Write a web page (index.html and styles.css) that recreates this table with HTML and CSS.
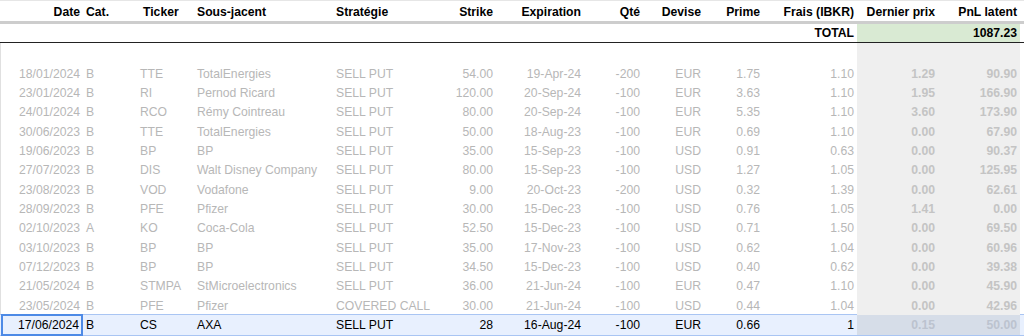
FILE: index.html
```html
<!DOCTYPE html>
<html lang="fr">
<head>
<meta charset="utf-8">
<title>Options</title>
<link rel="stylesheet" href="styles.css">
</head>
<body>
<div class="sheet">
  <div class="row head">
    <div class="c r">Date</div><div class="c">Cat.</div><div class="c tick">Ticker</div><div class="c">Sous-jacent</div><div class="c">Stratégie</div><div class="c r">Strike</div><div class="c r">Expiration</div><div class="c r">Qté</div><div class="c r">Devise</div><div class="c r">Prime</div><div class="c r">Frais (IBKR)</div><div class="c r">Dernier prix</div><div class="c r">PnL latent</div>
  </div>
  <div class="row total">
    <div class="c"></div><div class="c"></div><div class="c"></div><div class="c"></div><div class="c"></div><div class="c"></div><div class="c"></div><div class="c"></div><div class="c"></div><div class="c"></div><div class="c r">TOTAL</div><div class="c g"></div><div class="c r g">1087.23</div>
  </div>
  <div class="body">
    <div class="row data empty"><div class="c"></div><div class="c"></div><div class="c"></div><div class="c"></div><div class="c"></div><div class="c"></div><div class="c"></div><div class="c"></div><div class="c"></div><div class="c"></div><div class="c"></div><div class="c k"></div><div class="c k"></div></div>
    <div class="row data"><div class="c r">18/01/2024</div><div class="c">B</div><div class="c">TTE</div><div class="c">TotalEnergies</div><div class="c">SELL PUT</div><div class="c r">54.00</div><div class="c r">19-Apr-24</div><div class="c r">-200</div><div class="c r">EUR</div><div class="c r">1.75</div><div class="c r">1.10</div><div class="c r k">1.29</div><div class="c r k">90.90</div></div>
    <div class="row data"><div class="c r">23/01/2024</div><div class="c">B</div><div class="c">RI</div><div class="c">Pernod Ricard</div><div class="c">SELL PUT</div><div class="c r">120.00</div><div class="c r">20-Sep-24</div><div class="c r">-100</div><div class="c r">EUR</div><div class="c r">3.63</div><div class="c r">1.10</div><div class="c r k">1.95</div><div class="c r k">166.90</div></div>
    <div class="row data"><div class="c r">24/01/2024</div><div class="c">B</div><div class="c">RCO</div><div class="c">Rémy Cointreau</div><div class="c">SELL PUT</div><div class="c r">80.00</div><div class="c r">20-Sep-24</div><div class="c r">-100</div><div class="c r">EUR</div><div class="c r">5.35</div><div class="c r">1.10</div><div class="c r k">3.60</div><div class="c r k">173.90</div></div>
    <div class="row data"><div class="c r">30/06/2023</div><div class="c">B</div><div class="c">TTE</div><div class="c">TotalEnergies</div><div class="c">SELL PUT</div><div class="c r">50.00</div><div class="c r">18-Aug-23</div><div class="c r">-100</div><div class="c r">EUR</div><div class="c r">0.69</div><div class="c r">1.10</div><div class="c r k">0.00</div><div class="c r k">67.90</div></div>
    <div class="row data"><div class="c r">19/06/2023</div><div class="c">B</div><div class="c">BP</div><div class="c">BP</div><div class="c">SELL PUT</div><div class="c r">35.00</div><div class="c r">15-Sep-23</div><div class="c r">-100</div><div class="c r">USD</div><div class="c r">0.91</div><div class="c r">0.63</div><div class="c r k">0.00</div><div class="c r k">90.37</div></div>
    <div class="row data"><div class="c r">27/07/2023</div><div class="c">B</div><div class="c">DIS</div><div class="c">Walt Disney Company</div><div class="c">SELL PUT</div><div class="c r">80.00</div><div class="c r">15-Sep-23</div><div class="c r">-100</div><div class="c r">USD</div><div class="c r">1.27</div><div class="c r">1.05</div><div class="c r k">0.00</div><div class="c r k">125.95</div></div>
    <div class="row data"><div class="c r">23/08/2023</div><div class="c">B</div><div class="c">VOD</div><div class="c">Vodafone</div><div class="c">SELL PUT</div><div class="c r">9.00</div><div class="c r">20-Oct-23</div><div class="c r">-200</div><div class="c r">USD</div><div class="c r">0.32</div><div class="c r">1.39</div><div class="c r k">0.00</div><div class="c r k">62.61</div></div>
    <div class="row data"><div class="c r">28/09/2023</div><div class="c">B</div><div class="c">PFE</div><div class="c">Pfizer</div><div class="c">SELL PUT</div><div class="c r">30.00</div><div class="c r">15-Dec-23</div><div class="c r">-100</div><div class="c r">USD</div><div class="c r">0.76</div><div class="c r">1.05</div><div class="c r k">1.41</div><div class="c r k">0.00</div></div>
    <div class="row data"><div class="c r">02/10/2023</div><div class="c">A</div><div class="c">KO</div><div class="c">Coca-Cola</div><div class="c">SELL PUT</div><div class="c r">52.50</div><div class="c r">15-Dec-23</div><div class="c r">-100</div><div class="c r">USD</div><div class="c r">0.71</div><div class="c r">1.50</div><div class="c r k">0.00</div><div class="c r k">69.50</div></div>
    <div class="row data"><div class="c r">03/10/2023</div><div class="c">B</div><div class="c">BP</div><div class="c">BP</div><div class="c">SELL PUT</div><div class="c r">35.00</div><div class="c r">17-Nov-23</div><div class="c r">-100</div><div class="c r">USD</div><div class="c r">0.62</div><div class="c r">1.04</div><div class="c r k">0.00</div><div class="c r k">60.96</div></div>
    <div class="row data"><div class="c r">07/12/2023</div><div class="c">B</div><div class="c">BP</div><div class="c">BP</div><div class="c">SELL PUT</div><div class="c r">34.50</div><div class="c r">15-Dec-23</div><div class="c r">-100</div><div class="c r">USD</div><div class="c r">0.40</div><div class="c r">0.62</div><div class="c r k">0.00</div><div class="c r k">39.38</div></div>
    <div class="row data"><div class="c r">21/05/2024</div><div class="c">B</div><div class="c">STMPA</div><div class="c">StMicroelectronics</div><div class="c">SELL PUT</div><div class="c r">36.00</div><div class="c r">21-Jun-24</div><div class="c r">-100</div><div class="c r">EUR</div><div class="c r">0.47</div><div class="c r">1.10</div><div class="c r k">0.00</div><div class="c r k">45.90</div></div>
    <div class="row data"><div class="c r">23/05/2024</div><div class="c">B</div><div class="c">PFE</div><div class="c">Pfizer</div><div class="c">COVERED CALL</div><div class="c r">30.00</div><div class="c r">21-Jun-24</div><div class="c r">-100</div><div class="c r">USD</div><div class="c r">0.44</div><div class="c r">1.04</div><div class="c r k">0.00</div><div class="c r k">42.96</div></div>
    <div class="row data sel"><div class="c r cur">17/06/2024</div><div class="c">B</div><div class="c">CS</div><div class="c">AXA</div><div class="c">SELL PUT</div><div class="c r">28</div><div class="c r">16-Aug-24</div><div class="c r">-100</div><div class="c r">EUR</div><div class="c r">0.66</div><div class="c r">1</div><div class="c r k">0.15</div><div class="c r k">50.00</div></div>
  </div>
</div>
</body>
</html>
```
FILE: styles.css
```css
* { box-sizing: border-box; }
html, body { margin: 0; padding: 0; background: #fff; }
body {
  font-family: "Liberation Sans", Arial, sans-serif;
  font-size: 12.2px;
  color: #000;
  width: 1024px;
  height: 336px;
  overflow: hidden;
}
.sheet { display: flex; flex-direction: column; }
.row {
  display: grid;
  grid-template-columns: 83px 54px 57px 139px 103px 60px 88px 59px 61px 59px 94px 81px 82px;
  white-space: nowrap;
}
.c {
  padding: 0 3px;
  overflow: hidden;
  display: flex;
  align-items: center;
  min-width: 0;
}
.c.r { justify-content: flex-end; }
.head {
  height: 24px;
  border-top: 1px solid #e6e6e6;
  border-bottom: 3px solid #cdcdcd;
  font-weight: bold;
}
.head .c { padding-top: 1px; }
.head .tick { padding-left: 6px; }
.total {
  height: 19px;
  font-weight: bold;
  border-bottom: 1px solid #222;
}
.total .g { background: #d9ead3; }
.body { border-left: 1px solid #e0e0e0; }
.body .row { margin-left: -1px; }
.data { height: 19.35px; color: #b7b7b7; }
.data.empty { height: 21px; }
.data .k { background: #efefef; font-weight: bold; color: #c4c4c4; }
.data.sel {
  height: 22px;
  color: #000;
  background: #e8f0fe;
  border-top: 1px solid #a9c5f3;
  border-bottom: 1px solid #a9c5f3;
  margin-top: -1px;
}
.data.sel .k { background: #d6dde8; color: #bcc3cf; font-weight: bold; }
.data.sel .cur {
  border: 2px solid #4d8ae6;
  margin: -1px 0 -1px 1px;
  padding-right: 2px;
}
```
